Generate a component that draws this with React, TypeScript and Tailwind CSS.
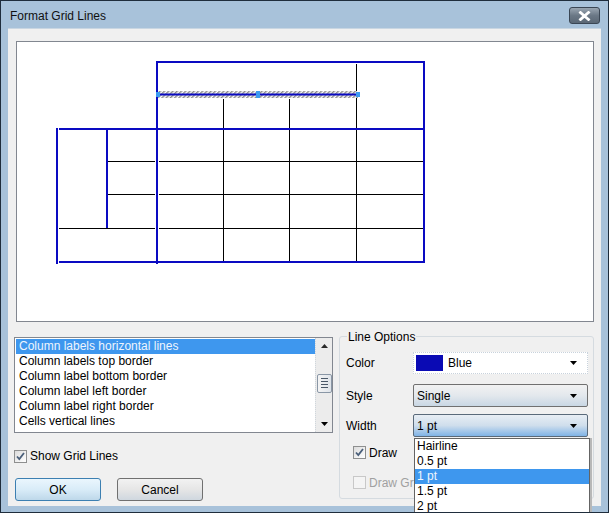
import React from 'react';

const listItems = [
  'Column labels horizontal lines',
  'Column labels top border',
  'Column label bottom border',
  'Column label left border',
  'Column label right border',
  'Cells vertical lines',
];

const widthOptions = ['Hairline', '0.5 pt', '1 pt', '1.5 pt', '2 pt'];

const Arrow = () => (
  <svg width="7" height="4" viewBox="0 0 7 4" className="shrink-0">
    <path d="M0 0h7L3.5 4z" fill="#000" />
  </svg>
);

const CheckBox = ({ checked, disabled }: { checked?: boolean; disabled?: boolean }) => (
  <div
    className={`w-[13px] h-[13px] border flex items-center justify-center ${
      disabled ? 'border-[#c8c8c8] bg-[#f4f4f4]' : 'border-[#8e8f8f] bg-gradient-to-br from-[#dcdcdc] to-[#ffffff]'
    }`}
  >
    {checked && (
      <svg width="9" height="9" viewBox="0 0 9 9">
        <path d="M1 4.5l2.3 2.6L8 1" fill="none" stroke="#4a5f7a" strokeWidth="1.8" />
      </svg>
    )}
  </div>
);

// the preview drawing, in page coordinates
const GridPreview = () => {
  const blue = '#0a0ac2';
  return (
    <svg width="576" height="279" viewBox="17 42 576 279" className="block">
      <defs>
        <pattern id="hatch" width="3" height="3" patternUnits="userSpaceOnUse" patternTransform="rotate(45)">
          <rect width="3" height="3" fill="#ffffff" />
          <rect width="1.5" height="3" fill="#8a8a8a" />
        </pattern>
      </defs>
      {/* thin black cell lines */}
      <g stroke="#000" strokeWidth="1">
        <line x1="356.5" y1="64" x2="356.5" y2="262" />
        <line x1="223.5" y1="99" x2="223.5" y2="262" />
        <line x1="289.5" y1="99" x2="289.5" y2="262" />
        <line x1="108" y1="161.5" x2="155" y2="161.5" />
        <line x1="159" y1="161.5" x2="424" y2="161.5" />
        <line x1="108" y1="194.5" x2="155" y2="194.5" />
        <line x1="159" y1="194.5" x2="424" y2="194.5" />
        <line x1="59" y1="228.5" x2="155" y2="228.5" />
        <line x1="159" y1="228.5" x2="424" y2="228.5" />
      </g>
      {/* selected line */}
      <rect x="158" y="91" width="200" height="7" fill="url(#hatch)" />
      <g stroke={blue} strokeWidth="2">
        <line x1="157" y1="62" x2="425" y2="62" />
        <line x1="157" y1="61" x2="157" y2="264" />
        <line x1="424" y1="61" x2="424" y2="263" />
        <line x1="59" y1="129" x2="425" y2="129" />
        <line x1="57" y1="128" x2="57" y2="264" />
        <line x1="107" y1="129" x2="107" y2="228" />
        <line x1="59" y1="262" x2="425" y2="262" />
        <line x1="158" y1="94.5" x2="358" y2="94.5" />
      </g>
      <g fill="#3b9bf0">
        <rect x="156" y="92" width="4" height="5" />
        <rect x="256" y="91" width="4" height="7" />
        <rect x="356" y="92" width="4" height="5" />
      </g>
    </svg>
  );
};

export default function App() {
  return (
    <div className="relative w-[609px] h-[513px] overflow-hidden bg-[#a8c2da] border border-[#1f2d3c] flex flex-col font-['Liberation_Sans',Arial,sans-serif] text-[12px] text-black">
      {/* title bar */}
      <div className="h-[27px] shrink-0 flex items-center justify-between pl-[9px] pr-[8px]">
        <span className="text-[12px] text-[#101010] mt-[3px]">Format Grid Lines</span>
        <div className="w-[31px] h-[17px] mt-[2px] rounded-[3px] border border-[#3a4654] bg-gradient-to-b from-[#9aa6b2] via-[#6b7886] to-[#5a6775] flex items-center justify-center">
          <svg width="13" height="10" viewBox="0 0 13 10">
            <path d="M2.5 1.5l8 7M10.5 1.5l-8 7" stroke="#fff" strokeWidth="2.8" strokeLinecap="square" />
          </svg>
        </div>
      </div>

      {/* client area */}
      <div className="flex-1 mx-[7px] mb-[6px] bg-[#f0f0f0] border-t border-[#c9d6e2] flex flex-col">
        <div className="mt-[12px] ml-[8px] w-[578px] h-[281px] border border-[#828790] bg-white overflow-hidden">
          <GridPreview />
        </div>

        <div className="flex items-start mt-[14px]">
          {/* left column */}
          <div className="ml-[6px] w-[319px] flex flex-col">
            <div className="mt-[1px] h-[96px] border border-[#828790] bg-white flex">
              <div className="flex-1 pt-[1px] pl-[1px]">
                {listItems.map((t, i) => (
                  <div
                    key={t}
                    className={`h-[15px] leading-[15px] pl-[3px] whitespace-nowrap ${
                      i === 0 ? 'bg-[#3e97ee] text-[#eef5fd]' : ''
                    }`}
                  >
                    {t}
                  </div>
                ))}
              </div>
              <div className="w-[17px] bg-[#ececec] border-l border-dotted border-[#cfd6dc] flex flex-col items-center justify-between py-[6px]">
                <svg width="7" height="4" viewBox="0 0 7 4">
                  <path d="M0 4h7L3.5 0z" fill="#2a2a2a" />
                </svg>
                <div className="w-[15px] h-[19px] -mt-[4px] border border-[#8a97a6] rounded-[2px] bg-gradient-to-r from-[#f4f4f4] to-[#dfe4ea] flex flex-col items-center justify-center gap-[2px]">
                  <div className="w-[7px] h-px bg-[#4a5868]" />
                  <div className="w-[7px] h-px bg-[#4a5868]" />
                  <div className="w-[7px] h-px bg-[#4a5868]" />
                  <div className="w-[7px] h-px bg-[#4a5868]" />
                </div>
                <Arrow />
              </div>
            </div>

            <div className="flex items-center mt-[16px] h-[14px]">
              <CheckBox checked />
              <span className="ml-[3px]">Show Grid Lines</span>
            </div>

            <div className="flex mt-[15px] ml-[1px] gap-[16px]">
              <button className="w-[86px] h-[23px] rounded-[3px] border border-[#3c7fb1] bg-gradient-to-b from-[#eaf6fd] via-[#d9ecf8] to-[#bed8ea] text-[12px]">
                OK
              </button>
              <button className="w-[86px] h-[23px] rounded-[3px] border border-[#707070] bg-gradient-to-b from-[#f2f2f2] via-[#e6e6e6] to-[#cfd7df] text-[12px]">
                Cancel
              </button>
            </div>
          </div>

          {/* Line Options group */}
          <div className="relative ml-[6px] w-[255px] h-[163px] border border-[#d5dbe0] rounded-[3px] flex flex-col pl-[6px] pt-[15px]">
            <span className="absolute left-[7px] -top-[9px] px-[1px] bg-[#f0f0f0]">Line Options</span>

            <div className="flex items-center h-[22px]">
              <span className="w-[67px]">Color</span>
              <div className="w-[175px] h-[22px] bg-white border border-dotted border-[#c8d2dc] flex items-center pl-[2px] pr-[10px]">
                <div className="w-[27px] h-[16px] bg-[#0a0ab4]" />
                <span className="ml-[5px] flex-1">Blue</span>
                <Arrow />
              </div>
            </div>

            <div className="flex items-center h-[23px] mt-[10px]">
              <span className="w-[67px]">Style</span>
              <div className="w-[175px] h-[23px] rounded-[2px] border border-[#707070] bg-gradient-to-b from-[#f2f2f2] via-[#e3e8ed] to-[#c9d7e4] flex items-center pl-[3px] pr-[10px]">
                <span className="flex-1">Single</span>
                <Arrow />
              </div>
            </div>

            <div className="flex items-center h-[23px] mt-[7px]">
              <span className="w-[67px]">Width</span>
              <div className="w-[175px] h-[23px] rounded-[2px] border border-[#5a6a7a] bg-gradient-to-b from-[#e8eef4] via-[#cfdeec] to-[#7fb3e6] flex items-center pl-[3px] pr-[10px]">
                <span className="flex-1">1 pt</span>
                <Arrow />
              </div>
            </div>

            <div className="flex items-center mt-[9px] ml-[7px] h-[13px]">
              <CheckBox checked />
              <span className="ml-[3px]">Draw</span>
            </div>
            <div className="flex items-center mt-[17px] ml-[7px] h-[13px]">
              <CheckBox disabled />
              <span className="ml-[3px] text-[#a0a0a0]">Draw Gra</span>
            </div>
          </div>
        </div>
      </div>

      {/* open dropdown of the Width box */}
      <div className="absolute left-[413px] top-[437px] w-[176px] h-[76px] bg-white border-l border-r border-t border-[#646464] shadow-[2px_0_0_#b8b8b8] overflow-hidden">
        {widthOptions.map((o, i) => (
          <div
            key={o}
            className={`h-[15px] leading-[15px] pl-[2px] ${i === 2 ? 'bg-[#3e97ee] text-[#eef5fd]' : ''}`}
          >
            {o}
          </div>
        ))}
      </div>
    </div>
  );
}
